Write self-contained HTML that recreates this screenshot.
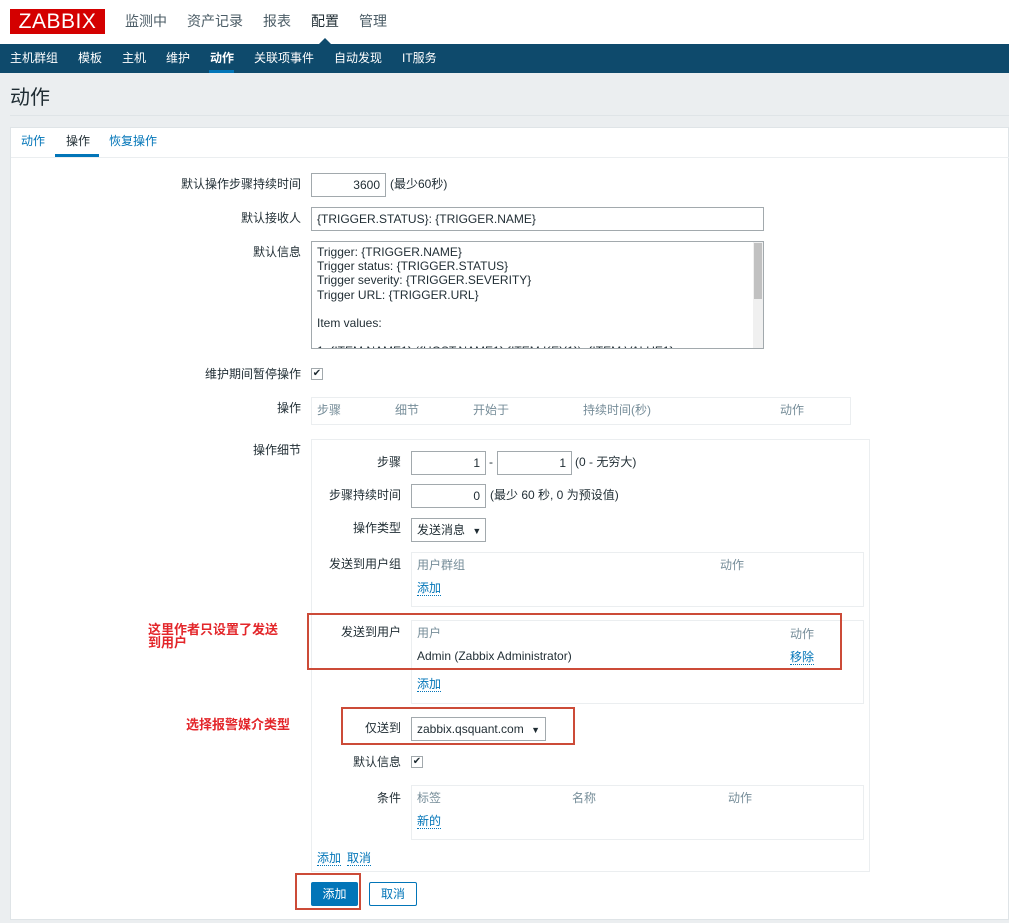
<!DOCTYPE html>
<html><head><meta charset="utf-8"><style>
*{box-sizing:border-box;margin:0;padding:0}
body{width:1009px;height:923px;position:relative;background:#ebeef0;font-family:"Liberation Sans","Noto Sans CJK SC",sans-serif;font-size:12px;line-height:1.3;color:#1f2c33;overflow:hidden}
.a{position:absolute}
.lbl{position:absolute;text-align:right;white-space:nowrap}
.inp{position:absolute;border:1px solid #a2a9ad;background:#fff;height:24px;line-height:22px;padding:0 5px;white-space:nowrap}
.box{position:absolute;border:1px solid #ebeef0;background:#fff}
.hd{position:absolute;color:#768d99}
.lnk{position:absolute;color:#0275b8;border-bottom:1px dotted #0275b8;line-height:14px}
.cb{position:absolute;width:12px;height:12px;border:1px solid #a2a9ad;background:#fff;font-size:10px;line-height:10px;text-align:center;color:#1f2c33}
.red{position:absolute;border:2px solid #cc4b38}
.ann{position:absolute;color:#e3262a;font-weight:bold;font-size:13px;line-height:13px}
</style></head><body>
<div class="a" style="left:0;top:0;width:1009px;height:44px;background:#fff"></div>
<div class="a" style="left:10px;top:9px;width:95px;height:25px;background:#d40000;color:#fff;font-size:21px;line-height:25px;text-align:center;letter-spacing:0.5px">ZABBIX</div>
<div class="a" style="left:125px;top:12px;font-size:14px;color:#4b5c66">监测中</div>
<div class="a" style="left:187px;top:12px;font-size:14px;color:#4b5c66">资产记录</div>
<div class="a" style="left:263px;top:12px;font-size:14px;color:#4b5c66">报表</div>
<div class="a" style="left:311px;top:12px;font-size:14px;color:#1f2c33">配置</div>
<div class="a" style="left:359px;top:12px;font-size:14px;color:#4b5c66">管理</div>
<div class="a" style="left:0;top:44px;width:1009px;height:29px;background:#0e4a6c"></div>
<div class="a" style="left:318px;top:38px;width:0;height:0;border-left:7px solid transparent;border-right:7px solid transparent;border-bottom:7px solid #0e4a6c"></div>
<div class="a" style="left:0;top:44px;height:29px;line-height:29px;color:#fff;font-size:12px;white-space:nowrap">
<span class="a" style="left:10px">主机群组</span><span class="a" style="left:78px">模板</span><span class="a" style="left:122px">主机</span><span class="a" style="left:166px">维护</span><span class="a" style="left:210px;font-weight:bold">动作</span><span class="a" style="left:254px">关联项事件</span><span class="a" style="left:334px">自动发现</span><span class="a" style="left:402px">IT服务</span></div>
<div class="a" style="left:209px;top:70px;width:25px;height:3px;background:#0275b8"></div>
<div class="a" style="left:10px;top:85px;font-size:20px;color:#1f2c33">动作</div>
<div class="a" style="left:10px;top:115px;width:999px;height:1px;background:#dfe4e7"></div>
<div class="a" style="left:10px;top:127px;width:999px;height:793px;background:#fff;border:1px solid #dfe4e7"></div>
<div class="a" style="left:21px;top:134px;color:#0275b8">动作</div>
<div class="a" style="left:66px;top:134px;color:#1f2c33">操作</div>
<div class="a" style="left:109px;top:134px;color:#0275b8">恢复操作</div>
<div class="a" style="left:55px;top:154px;width:44px;height:3px;background:#0275b8"></div>
<div class="a" style="left:11px;top:157px;width:998px;height:1px;background:#ebeef0"></div>

<div class="lbl" style="right:708px;top:177px">默认操作步骤持续时间</div>
<div class="inp" style="left:311px;top:173px;width:75px;text-align:right">3600</div>
<div class="a" style="left:390px;top:177px">(最少60秒)</div>
<div class="lbl" style="right:708px;top:211px">默认接收人</div>
<div class="inp" style="left:311px;top:207px;width:453px">{TRIGGER.STATUS}: {TRIGGER.NAME}</div>
<div class="lbl" style="right:708px;top:245px">默认信息</div>
<div class="inp" style="left:311px;top:241px;width:453px;height:108px;line-height:14.2px;padding-top:3px;overflow:hidden;white-space:pre">Trigger: {TRIGGER.NAME}
Trigger status: {TRIGGER.STATUS}
Trigger severity: {TRIGGER.SEVERITY}
Trigger URL: {TRIGGER.URL}

Item values:

1. {ITEM.NAME1} ({HOST.NAME1}:{ITEM.KEY1}): {ITEM.VALUE1}</div>
<div class="a" style="left:753px;top:242px;width:10px;height:106px;background:#f0f0f0"></div>
<div class="a" style="left:754px;top:243px;width:8px;height:56px;background:#c1c1c1"></div>
<div class="lbl" style="right:708px;top:367px">维护期间暂停操作</div>
<div class="cb" style="left:311px;top:368px">✔</div>
<div class="lbl" style="right:708px;top:401px">操作</div>
<div class="box" style="left:311px;top:397px;width:540px;height:28px"></div>
<div class="hd" style="left:317px;top:403px">步骤</div><div class="hd" style="left:395px;top:403px">细节</div><div class="hd" style="left:473px;top:403px">开始于</div><div class="hd" style="left:583px;top:403px">持续时间(秒)</div><div class="hd" style="left:780px;top:403px">动作</div>
<div class="lbl" style="right:708px;top:443px">操作细节</div>
<div class="box" style="left:311px;top:439px;width:559px;height:433px"></div>

<div class="lbl" style="right:608px;top:455px">步骤</div>
<div class="inp" style="left:411px;top:451px;width:75px;text-align:right">1</div>
<div class="a" style="left:489px;top:455px">-</div>
<div class="inp" style="left:497px;top:451px;width:75px;text-align:right">1</div>
<div class="a" style="left:575px;top:455px">(0 - 无穷大)</div>
<div class="lbl" style="right:608px;top:488px">步骤持续时间</div>
<div class="inp" style="left:411px;top:484px;width:75px;text-align:right">0</div>
<div class="a" style="left:490px;top:488px">(最少 60 秒, 0 为预设值)</div>
<div class="lbl" style="right:608px;top:521px">操作类型</div>
<div class="inp" style="left:411px;top:518px;width:75px">发送消息 <span style="font-size:9px;margin-left:4px">▼</span></div>
<div class="lbl" style="right:608px;top:557px">发送到用户组</div>
<div class="box" style="left:411px;top:552px;width:453px;height:55px"></div>
<div class="hd" style="left:417px;top:558px">用户群组</div><div class="hd" style="left:720px;top:558px">动作</div>
<div class="lnk" style="left:417px;top:581px">添加</div>
<div class="lbl" style="right:608px;top:625px">发送到用户</div>
<div class="box" style="left:411px;top:620px;width:453px;height:84px"></div>
<div class="hd" style="left:417px;top:626px">用户</div><div class="hd" style="left:790px;top:627px">动作</div>
<div class="a" style="left:417px;top:649px">Admin (Zabbix Administrator)</div>
<div class="lnk" style="left:790px;top:650px">移除</div>
<div class="lnk" style="left:417px;top:677px">添加</div>
<div class="red" style="left:307px;top:613px;width:535px;height:57px"></div>
<div class="ann" style="left:148px;top:623px">这里作者只设置了发送<br>到用户</div>

<div class="lbl" style="right:608px;top:721px">仅送到</div>
<div class="inp" style="left:411px;top:717px;width:135px">zabbix.qsquant.com <span style="font-size:9px;margin-left:4px">▼</span></div>
<div class="red" style="left:341px;top:707px;width:234px;height:38px"></div>
<div class="ann" style="left:186px;top:718px">选择报警媒介类型</div>
<div class="lbl" style="right:608px;top:755px">默认信息</div>
<div class="cb" style="left:411px;top:756px">✔</div>
<div class="lbl" style="right:608px;top:791px">条件</div>
<div class="box" style="left:411px;top:785px;width:453px;height:55px"></div>
<div class="hd" style="left:417px;top:791px">标签</div><div class="hd" style="left:572px;top:791px">名称</div><div class="hd" style="left:728px;top:791px">动作</div>
<div class="lnk" style="left:417px;top:814px">新的</div>
<div class="lnk" style="left:317px;top:851px">添加</div>
<div class="lnk" style="left:347px;top:851px">取消</div>

<div class="a" style="left:311px;top:882px;width:47px;height:24px;background:#0275b8;color:#fff;line-height:24px;text-align:center;border-radius:2px">添加</div>
<div class="a" style="left:369px;top:882px;width:48px;height:24px;border:1px solid #0275b8;color:#0275b8;line-height:22px;text-align:center;border-radius:2px;background:#fff">取消</div>
<div class="red" style="left:295px;top:873px;width:66px;height:37px"></div>
</body></html>
